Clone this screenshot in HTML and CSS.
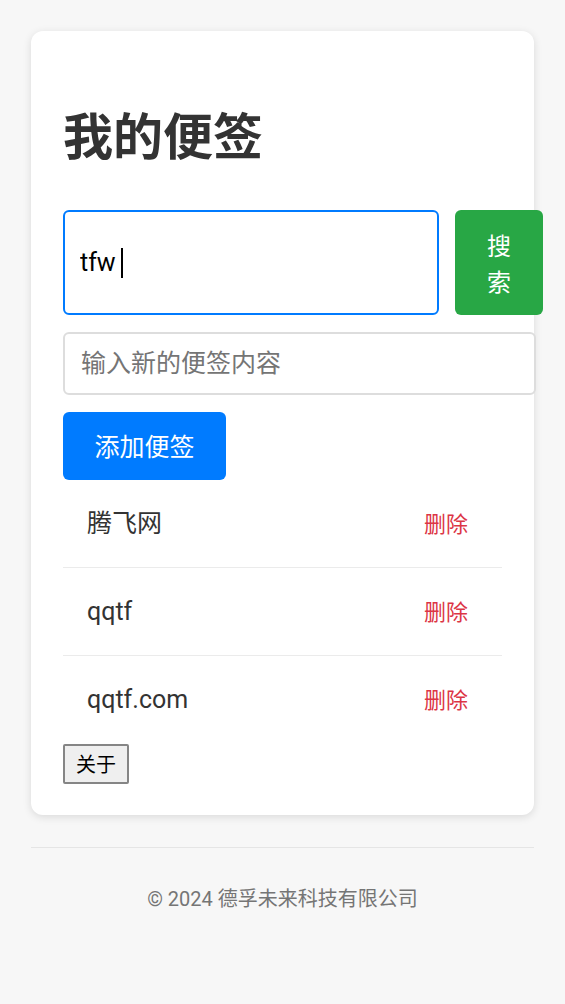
FILE: index.html
```html
<!DOCTYPE html>
<html lang="zh-CN">
<head>
<meta charset="utf-8">
<title>我的便签</title>
<link rel="stylesheet" href="styles.css">
</head>
<body>
<div class="page">
  <main class="card">
    <h1 class="title">我的便签</h1>
    <div class="search-row">
      <div class="search-box">
        <input class="search-input" type="text" value="tfw">
        <span class="caret"></span>
      </div>
      <button class="search-btn">搜索</button>
    </div>
    <input class="note-input" type="text" placeholder="输入新的便签内容">
    <button class="add-btn">添加便签</button>
    <ul class="notes">
      <li class="note"><span class="note-text">腾飞网</span><button class="del-btn">删除</button></li>
      <li class="note"><span class="note-text">qqtf</span><button class="del-btn">删除</button></li>
      <li class="note"><span class="note-text">qqtf.com</span><button class="del-btn">删除</button></li>
    </ul>
    <button class="about-btn">关于</button>
  </main>
  <footer class="footer">
    <p class="copy">© 2024 德孚未来科技有限公司</p>
  </footer>
</div>
</body>
</html>
```
FILE: styles.css
```css
html, body {
  margin: 0;
  padding: 0;
  background: #f7f7f7;
}
body {
  font-family: Roboto, "Noto Sans CJK SC", sans-serif;
  color: #333;
}
.page {
  padding: 31px 31px 40px;
}
.card {
  width: 503px;
  box-sizing: border-box;
  background: #fff;
  border-radius: 12px;
  box-shadow: 0 2px 8px rgba(0, 0, 0, 0.12);
  padding: 32px 32px 31px;
}
.title {
  font-family: "Noto Sans CJK SC", sans-serif;
  font-weight: 700;
  font-size: 50px;
  line-height: 72px;
  margin: 34px 0 41px;
  color: #333;
}
.search-row {
  display: flex;
  gap: 16px;
  width: 480px;
  height: 105px;
}
.search-box {
  position: relative;
  flex: 1;
  min-width: 0;
  display: flex;
}
.search-input {
  flex: 1;
  min-width: 0;
  box-sizing: border-box;
  border: 2px solid #007bff;
  border-radius: 6px;
  padding: 0 15px;
  font-family: Roboto, "Noto Sans CJK SC", sans-serif;
  font-size: 25px;
  color: #000;
  outline: none;
}
.caret {
  position: absolute;
  left: 58px;
  top: 38px;
  width: 2px;
  height: 30px;
  background: #000;
}
.search-btn {
  width: 88px;
  flex: 0 0 88px;
  box-sizing: border-box;
  padding: 0 32px;
  border: none;
  border-radius: 6px;
  background: #28a745;
  color: #fff;
  font-family: "Noto Sans CJK SC", sans-serif;
  font-size: 24px;
  line-height: 36px;
}
.note-input {
  display: block;
  margin-top: 17px;
  width: 473px;
  height: 63px;
  box-sizing: border-box;
  border: 2px solid #dddddd;
  border-radius: 6px;
  padding: 0 16px;
  font-family: Roboto, "Noto Sans CJK SC", sans-serif;
  font-size: 25px;
  color: #000;
  outline: none;
}
.note-input::placeholder {
  color: #757575;
}
.add-btn {
  display: block;
  margin-top: 17px;
  width: 163px;
  height: 68px;
  border: none;
  border-radius: 6px;
  background: #007bff;
  color: #fff;
  font-family: "Noto Sans CJK SC", sans-serif;
  font-size: 25px;
  line-height: 36px;
  padding: 0 0 3px;
}
.notes {
  list-style: none;
  margin: 0;
  padding: 0;
  width: 439px;
}
.note {
  display: flex;
  align-items: center;
  justify-content: space-between;
  height: 87px;
  padding: 0 24px;
  border-bottom: 1px solid #ebebeb;
  font-size: 25px;
  color: #333;
}
.note:last-child {
  border-bottom: none;
}
.note-text {
  line-height: 36px;
}
.del-btn {
  background: none;
  border: none;
  padding: 0 10px 3px;
  color: #dc3545;
  font-family: "Noto Sans CJK SC", sans-serif;
  font-size: 22px;
}
.about-btn {
  display: block;
  margin-top: 1px;
  width: 66px;
  height: 40px;
  box-sizing: border-box;
  padding: 0;
  background: #efefef;
  border: 2px solid #858585;
  border-radius: 2px;
  color: #000;
  font-family: "Noto Sans CJK SC", sans-serif;
  font-size: 20px;
  line-height: 1;
}
.footer {
  width: 503px;
  margin-top: 32px;
  border-top: 1px solid #e5e5e5;
  padding-top: 36px;
  text-align: center;
}
.copy {
  margin: 0;
  font-size: 20px;
  line-height: 31.5px;
  color: #757575;
}
```
